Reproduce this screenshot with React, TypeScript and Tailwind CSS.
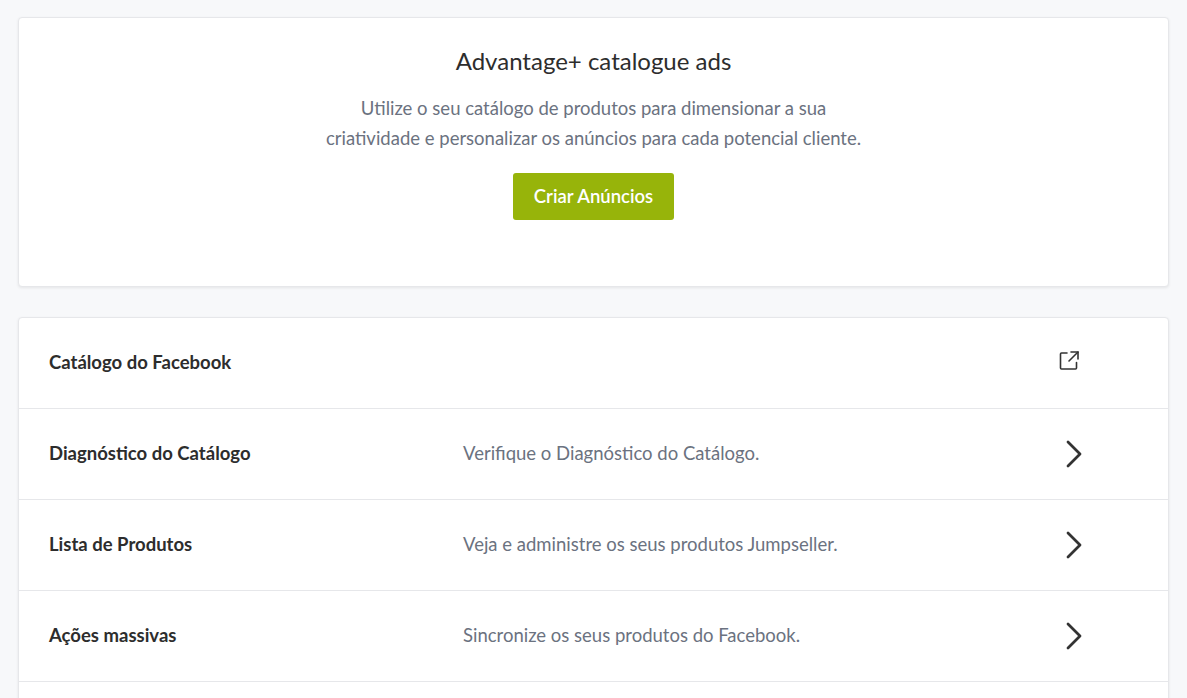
import { ChevronRight } from 'lucide-react';

const rows = [
  { title: 'Diagnóstico do Catálogo', desc: 'Verifique o Diagnóstico do Catálogo.' },
  { title: 'Lista de Produtos', desc: 'Veja e administre os seus produtos Jumpseller.' },
  { title: 'Ações massivas', desc: 'Sincronize os seus produtos do Facebook.' },
];

function ExternalIcon() {
  return (
    <svg width="22" height="22" viewBox="0 0 22 22" fill="none" stroke="#333" strokeWidth="1.6" strokeLinecap="round" strokeLinejoin="round">
      <path d="M9 3H3.5a1 1 0 0 0-1 1v14a1 1 0 0 0 1 1h14a1 1 0 0 0 1-1v-5.5" />
      <path d="M13 2h7v7" />
      <path d="M20 2l-9 9" />
    </svg>
  );
}

export default function App() {
  return (
    <div className="h-screen overflow-hidden bg-[#f7f8fa] px-[18px] pt-[17px] font-[Lato,sans-serif] text-[#333]">
      <div className="rounded bg-white border border-[#e6e7ea] shadow-[0_1px_3px_rgba(0,0,0,0.08)] h-[270px] flex flex-col items-center pt-[27px]">
        <h1 className="text-[24px] text-[#2d2d2d] leading-8">Advantage+ catalogue ads</h1>
        <p className="mt-[16px] w-[540px] text-center text-[18.5px] leading-[30px] text-[#6b7280]">
          Utilize o seu catálogo de produtos para dimensionar a sua criatividade e personalizar os anúncios para cada potencial cliente.
        </p>
        <button className="mt-[20px] h-[47px] w-[161px] rounded-[3px] bg-[#97b40a] text-white text-[18.5px] font-semibold">
          Criar Anúncios
        </button>
      </div>

      <div className="mt-[30px] rounded bg-white border border-[#e6e7ea] shadow-[0_1px_3px_rgba(0,0,0,0.08)]">
        <div className="h-[91px] flex items-center px-[30px] border-b border-[#e6e7ea]">
          <span className="text-[18.5px] font-bold text-[#2d2d2d]">Catálogo do Facebook</span>
          <span className="ml-auto mr-[58px] -mt-1"><ExternalIcon /></span>
        </div>
        {rows.map((r) => (
          <div key={r.title} className="h-[91px] flex items-center px-[30px] border-b border-[#e6e7ea]">
            <span className="w-[414px] text-[18.5px] font-bold text-[#2d2d2d]">{r.title}</span>
            <span className="text-[18.5px] text-[#6b7280]">{r.desc}</span>
            <ChevronRight className="ml-auto mr-[40px]" size={48} strokeWidth={1.4} color="#333" />
          </div>
        ))}
        <div className="h-[40px]" />
      </div>
    </div>
  );
}
